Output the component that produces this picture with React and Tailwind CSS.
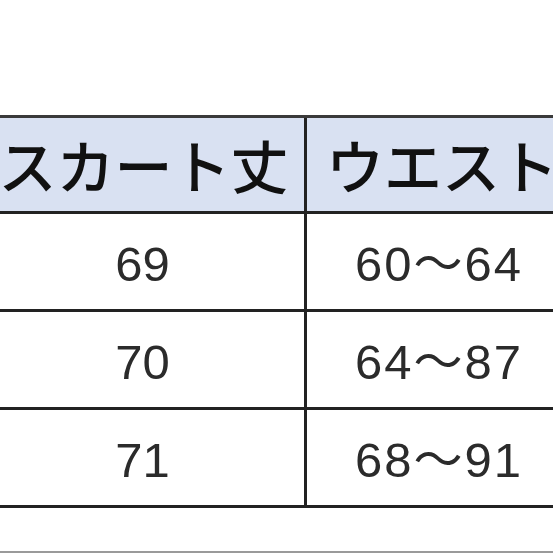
export default function App() {
  const rows = [
    { length: "69", waist: "60～64" },
    { length: "70", waist: "64～87" },
    { length: "71", waist: "68～91" },
  ];

  return (
    <div className="w-[553px] h-[553px] overflow-hidden bg-white font-['Liberation_Sans','Noto_Sans_CJK_JP',sans-serif]">
      <div className="mt-[115px] ml-[-19px] w-[590px] border-t-[3px] border-[#3a3a3a]">
        {/* header */}
        <div className="flex h-[96px] bg-[#d9e1f2] border-b-[3px] border-[#222]">
          <div className="w-[326px] shrink-0 border-r-[3px] border-[#222] flex items-center justify-center pl-[2px] text-[58px] font-medium text-[#111] font-['Noto_Sans_CJK_JP',sans-serif] whitespace-nowrap">
            スカート丈
          </div>
          <div className="flex-1 flex items-center justify-center pl-[6px] text-[58px] font-medium text-[#111] font-['Noto_Sans_CJK_JP',sans-serif] whitespace-nowrap">
            ウエスト
          </div>
        </div>

        {rows.map((r) => (
          <div key={r.length} className="flex h-[98px] border-b-[3px] border-[#222]">
            <div className="w-[326px] shrink-0 border-r-[3px] border-[#222] flex items-center justify-center pt-[6px] text-[49px] text-[#2b2b2b]">
              {r.length}
            </div>
            <div className="flex-1 flex items-center justify-center pt-[6px] text-[49px] tracking-[2px] text-[#2b2b2b] whitespace-nowrap">
              {r.waist}
            </div>
          </div>
        ))}
      </div>
      <div className="mt-[43px] h-[2px] bg-[#9a9a9a]" />
    </div>
  );
}
